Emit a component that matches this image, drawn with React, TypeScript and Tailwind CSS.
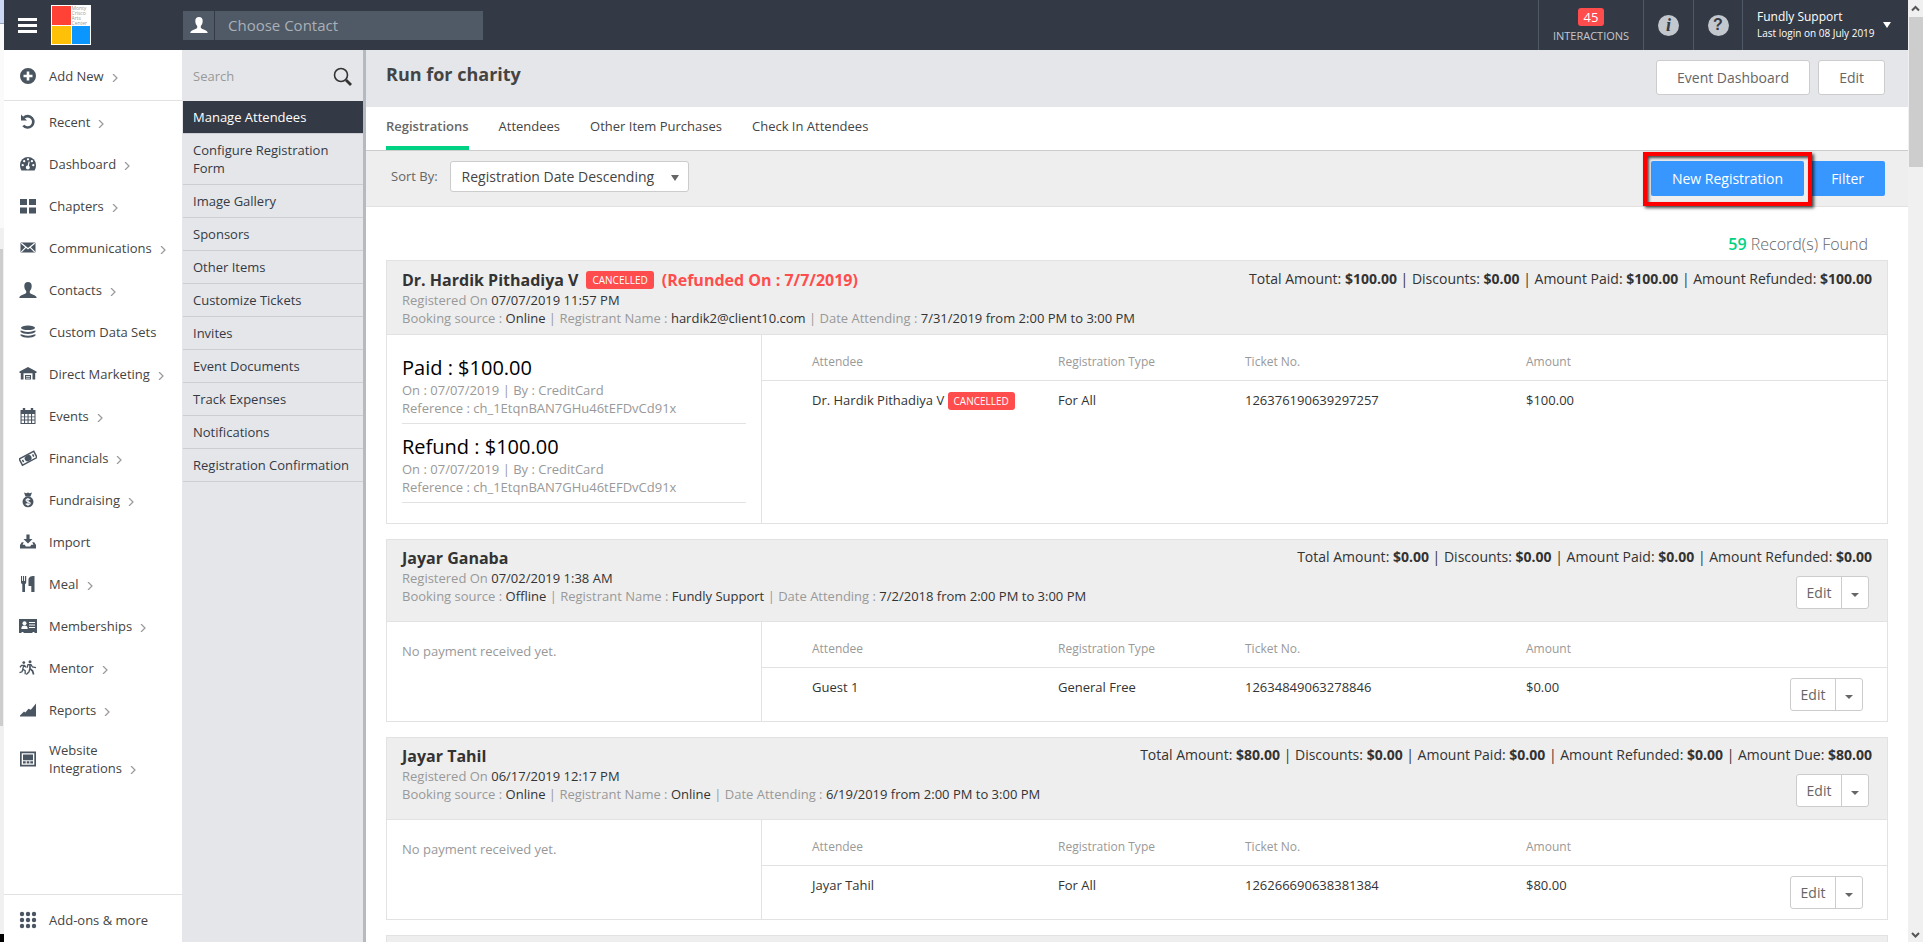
import type { ReactNode } from 'react'

const Icon = ({ children }: { children: ReactNode }) => (
  <svg viewBox="0 0 18 18" className="h-[18px] w-[18px] shrink-0 text-[#4a5562]" fill="currentColor" aria-hidden="true">
    {children}
  </svg>
)

const Caret = ({ className }: { className: string }) => (
  <svg viewBox="0 0 8 6" preserveAspectRatio="none" className={className} fill="currentColor" aria-hidden="true">
    <path d="M0 0h8L4 6z" />
  </svg>
)

const bust = (
  <path d="M9 0C6.600 0 5.300 1.600 5.300 4c0 2.200.8 3.900 1.900 5v1.800C6.900 12.600.5 12.500.3 16h17.400c-.2-3.500-6.600-3.400-6.900-5.200V9c1.100-1.100 1.900-2.800 1.900-5 0-2.400-1.300-4-3.700-4z" />
)

const icons: Record<string, ReactNode> = {
  add: <path fillRule="evenodd" d="M9 1a8 8 0 1 0 0 16A8 8 0 0 0 9 1zM7.700 4.500h2.600v3.200h3.200v2.600h-3.200v3.200H7.700v-3.200H4.500V7.700h3.200z" />,
  recent: (
    <>
      <path d="M4.800 4.600A5.700 5.700 0 1 1 4.300 12.500" fill="none" stroke="currentColor" strokeWidth="2.600" />
      <path d="M2 1.500v6h6z" />
    </>
  ),
  dashboard: (
    <>
      <path d="M1 10a8 8 0 0 1 16 0c0 2.200-.6 4-1.400 5.500H2.400C1.600 14 1 12.200 1 10z" />
      <g fill="#fff">
        <circle cx="3.700" cy="10.200" r="1.150" />
        <circle cx="5.200" cy="6.200" r="1.150" />
        <circle cx="9" cy="4.300" r="1.150" />
        <circle cx="12.900" cy="6.200" r="1.150" />
        <circle cx="14.300" cy="10.200" r="1.150" />
        <path d="M9.600 6.400l1.100.3-.8 4a2 2 0 1 1-1.200-.3z" />
      </g>
    </>
  ),
  chapters: <path d="M1 2h7v6H1zM10 2h7v6h-7zM1 10.500h7v6H1zM10 10.500h7v6h-7z" />,
  mail: (
    <>
      <path d="M2.300 3.500h13.400a.8.800 0 0 1 .8.800v8.400a.8.800 0 0 1-.8.800H2.300a.8.800 0 0 1-.8-.8V4.300a.8.800 0 0 1 .8-.8z" />
      <path d="M2.300 4.300L9 9.800l6.700-5.500M2.300 12.800l4.500-4.500M15.700 12.800l-4.500-4.500" fill="none" stroke="#fff" strokeWidth="1.200" />
    </>
  ),
  contacts: (
    <g transform="translate(0 1)">{bust}</g>
  ),
  data: (
    <>
      <ellipse cx="9" cy="4.800" rx="7" ry="2.300" />
      <path d="M1.500 7.500c2 0 3.500 1.400 7.500 1.400s5.500-1.400 7.500-1.400v1.300c-1.500 1.500-4.500 2.200-7.500 2.200s-6-.7-7.500-2.200zM1.500 11.300c2 0 3.500 1.400 7.500 1.400s5.500-1.400 7.500-1.400v1.300c-1.500 1.500-4.500 2.200-7.500 2.200s-6-.7-7.500-2.200z" />
    </>
  ),
  marketing: <path fillRule="evenodd" d="M9 2l8.500 4.500V8h-1.300v6.500h-2.700V8.300h-9v6.200H1.800V8H.5V6.500zM6 10h6v4.500H6zM7 11v.8h4V11zM7 12.700v.8h4v-.8z" />,
  events: (
    <>
      <path fillRule="evenodd" d="M1.500 3h15v14h-15zM2.600 7v2.400H5V7zm3.500 0v2.400h2.400V7zm3.500 0v2.400H12V7zm3.500 0v2.400h2.400V7zM2.600 10.300v2.300H5v-2.300zm3.500 0v2.300h2.400v-2.300zm3.500 0v2.300H12v-2.300zm3.500 0v2.300h2.400v-2.300zM2.600 13.500V16H5v-2.500zm3.500 0V16h2.400v-2.500zm3.500 0V16H12v-2.500zm3.500 0V16h2.400v-2.500z" />
      <path d="M3.800 1h2.400v4H3.800zM11.800 1h2.400v4h-2.400z" />
    </>
  ),
  financials: (
    <g transform="rotate(-28 9 9)">
      <path fillRule="evenodd" d="M0 5h18v8.500H0zM1.500 6.500V12h15V6.500z" />
      <ellipse cx="9" cy="9.200" rx="3.600" ry="3" />
      <path d="M2.500 8h1.500v2.500H2.500zM14 8h1.500v2.500H14z" />
    </g>
  ),
  fundraising: (
    <>
      <path d="M5 1.500l2.300.8L9 1.500l1.700.8 2.300-.8-1.500 4h-5z" />
      <circle cx="9" cy="10.800" r="5.500" />
      <path d="M11.200 8.600C9.500 7.500 7 7.900 7 9.300c0 2 4.200 1 4.200 3 0 1.400-2.700 1.700-4.500.5M9 7v8" fill="none" stroke="#fff" strokeWidth="1.100" />
    </>
  ),
  import: (
    <>
      <path d="M7.400 1.500h3.200V6H13.500L9 10.500 4.500 6h2.900z" />
      <path d="M2.800 9.200h2L3.500 11.800h2.300l1 1.700h4.400l1-1.700h2.300l-1.300-2.600h2L17 12v3.500H1V12z" />
    </>
  ),
  meal: (
    <>
      <path d="M2 1h1v5h.9V1h1.200v5H6V1h1.200v6c0 1.200-.5 1.800-1.200 2.200V17H3.300V9.200C2.500 8.800 2 8.200 2 7z" />
      <path d="M15.500 1v16h-3.200v-6H9.500V5c0-2.500 1.500-4 6-4z" />
    </>
  ),
  memberships: (
    <>
      <path d="M0 2h18v14h-2.500v-1h-2v1h-9v-1h-2v1H0z" />
      <g fill="#fff">
        <circle cx="5.500" cy="6.300" r="2" />
        <path d="M2.300 12c0-2.500 1-3.600 3.200-3.600S8.700 9.500 8.700 12zM10 5h6v1.100h-6zM10 7.500h6v1.100h-6zM10 10h6v1.100h-6z" />
      </g>
    </>
  ),
  mentor: (
    <>
      <circle cx="4.800" cy="3.600" r="1.400" />
      <circle cx="11" cy="2.700" r="1.500" />
      <g fill="none" stroke="currentColor" strokeWidth="1.300">
        <path d="M1 8.300l1.500-2h3L7 8.300M4.700 6.300L3.800 10l2.400 1.800v3.400M3.800 10.300L3 12.800l-2.500.8" />
        <path strokeWidth="1.700" d="M11 5v4.700l2.600 2.300 1 3.500" />
        <path d="M8 8.700l1-3h3L13.500 8l3.500.7M10.700 10L10 12.800l-2.700 2.700" />
      </g>
    </>
  ),
  reports: <path d="M1 15.500v-1L5 10.500l1.300 1L9.500 7.800l2.300 1L17 2.500v13z" />,
  website: <path fillRule="evenodd" d="M1 1.500h16v15H1zM2.700 3.200v11.600h12.600V3.200zM4 4.500h10v5.700H4zM4 11.200h2.700v2.300H4zM7.700 11.200h2.700v2.300H7.700zM11.300 11.200H14v2.300h-2.700z" />,
  addons: (
    <>
      {[3, 9, 15].map((y) => [3, 9, 15].map((x) => <circle key={`${x}-${y}`} cx={x} cy={y} r="2.200" />))}
    </>
  ),
}

const navItems = [
  { icon: 'recent', label: 'Recent', arrow: true },
  { icon: 'dashboard', label: 'Dashboard', arrow: true },
  { icon: 'chapters', label: 'Chapters', arrow: true },
  { icon: 'mail', label: 'Communications', arrow: true },
  { icon: 'contacts', label: 'Contacts', arrow: true },
  { icon: 'data', label: 'Custom Data Sets', arrow: false },
  { icon: 'marketing', label: 'Direct Marketing', arrow: true },
  { icon: 'events', label: 'Events', arrow: true },
  { icon: 'financials', label: 'Financials', arrow: true },
  { icon: 'fundraising', label: 'Fundraising', arrow: true },
  { icon: 'import', label: 'Import', arrow: false },
  { icon: 'meal', label: 'Meal', arrow: true },
  { icon: 'memberships', label: 'Memberships', arrow: true },
  { icon: 'mentor', label: 'Mentor', arrow: true },
  { icon: 'reports', label: 'Reports', arrow: true },
  { icon: 'website', label: 'Website Integrations', arrow: true },
]

const eventLinks = [
  'Manage Attendees',
  'Configure Registration Form',
  'Image Gallery',
  'Sponsors',
  'Other Items',
  'Customize Tickets',
  'Invites',
  'Event Documents',
  'Track Expenses',
  'Notifications',
  'Registration Confirmation',
]

type Registration = {
  name: string
  cancelled?: boolean
  refundedOn?: string
  registeredOn: string
  source: string
  registrant: string
  attending: string
  totals: [string, string][]
  payments: { title: string; on: string; by: string; reference: string }[]
  attendee: string
  type: string
  ticket: string
  amount: string
}

const registrations: Registration[] = [
  {
    name: 'Dr. Hardik Pithadiya V',
    cancelled: true,
    refundedOn: '7/7/2019',
    registeredOn: '07/07/2019 11:57 PM',
    source: 'Online',
    registrant: 'hardik2@client10.com',
    attending: '7/31/2019 from 2:00 PM to 3:00 PM',
    totals: [
      ['Total Amount', '$100.00'],
      ['Discounts', '$0.00'],
      ['Amount Paid', '$100.00'],
      ['Amount Refunded', '$100.00'],
    ],
    payments: [
      { title: 'Paid : $100.00', on: '07/07/2019', by: 'CreditCard', reference: 'ch_1EtqnBAN7GHu46tEFDvCd91x' },
      { title: 'Refund : $100.00', on: '07/07/2019', by: 'CreditCard', reference: 'ch_1EtqnBAN7GHu46tEFDvCd91x' },
    ],
    attendee: 'Dr. Hardik Pithadiya V',
    type: 'For All',
    ticket: '126376190639297257',
    amount: '$100.00',
  },
  {
    name: 'Jayar Ganaba',
    registeredOn: '07/02/2019 1:38 AM',
    source: 'Offline',
    registrant: 'Fundly Support',
    attending: '7/2/2018 from 2:00 PM to 3:00 PM',
    totals: [
      ['Total Amount', '$0.00'],
      ['Discounts', '$0.00'],
      ['Amount Paid', '$0.00'],
      ['Amount Refunded', '$0.00'],
    ],
    payments: [],
    attendee: 'Guest 1',
    type: 'General Free',
    ticket: '12634849063278846',
    amount: '$0.00',
  },
  {
    name: 'Jayar Tahil',
    registeredOn: '06/17/2019 12:17 PM',
    source: 'Online',
    registrant: 'Online',
    attending: '6/19/2019 from 2:00 PM to 3:00 PM',
    totals: [
      ['Total Amount', '$80.00'],
      ['Discounts', '$0.00'],
      ['Amount Paid', '$0.00'],
      ['Amount Refunded', '$0.00'],
      ['Amount Due', '$80.00'],
    ],
    payments: [],
    attendee: 'Jayar Tahil',
    type: 'For All',
    ticket: '126266690638381384',
    amount: '$80.00',
  },
]

const CancelledBadge = () => (
  <span className="inline-block h-[18px] rounded-[3px] bg-[#ff4c4c] px-[6px] text-[10px] leading-[18px] font-normal text-white">
    CANCELLED
  </span>
)

const EditGroup = () => (
  <div className="inline-flex h-[33px] rounded-[3px] border border-[#ccc] bg-white text-sm text-[#666]">
    <button type="button" className="w-[45px] border-r border-[#ccc]">
      Edit
    </button>
    <button type="button" aria-label="More actions" className="flex w-[26px] items-center justify-center pt-1">
      <Caret className="h-1 w-2" />
    </button>
  </div>
)

const NavLink = ({ icon, label, arrow }: { icon: string; label: string; arrow?: boolean }) => (
  <a href="#" className="flex min-h-[42px] items-center gap-3 py-[10px] pr-3 pl-[15px] leading-[18px]">
    <Icon>{icons[icon]}</Icon>
    <span>
      {label}
      {arrow && (
        <svg viewBox="0 0 6 8" className="ml-2 inline-block h-2 w-[6px] text-[#999]" fill="none" stroke="currentColor" aria-hidden="true">
          <path d="M1 0l4 4-4 4" strokeWidth="1.200" />
        </svg>
      )}
    </span>
  </a>
)

const RegistrationCard = ({ data }: { data: Registration }) => (
  <article className="border border-[#e2e2e2] bg-white">
    <header
      className={
        data.cancelled
          ? 'flex min-h-[74px] justify-between border-b border-[#e2e2e2] bg-[#eee] px-[15px] pt-2'
          : 'flex min-h-[82px] justify-between border-b border-[#e2e2e2] bg-[#eee] px-[15px] pt-[7px]'
      }
    >
      <div className="leading-[18px] text-[#999]">
        <h2 className="flex h-[22px] items-center gap-2 text-base font-bold text-[#333]">
          {data.name}
          {data.cancelled && <CancelledBadge />}
          {data.refundedOn && <span className="text-[#ff4c4c]">(Refunded On : {data.refundedOn})</span>}
        </h2>
        <p>
          Registered On <span className="text-[#333]">{data.registeredOn}</span>
        </p>
        <p>
          Booking source : <span className="text-[#333]">{data.source}</span> | Registrant Name :{' '}
          <span className="text-[#333]">{data.registrant}</span> | Date Attending :{' '}
          <span className="text-[#333]">{data.attending}</span>
        </p>
      </div>
      <div className="flex flex-col items-end text-sm leading-5 text-[#333]">
        <p>
          {data.totals.map(([label, value], i) => (
            <span key={label}>
              {i > 0 && ' | '}
              {label}: <b>{value}</b>
            </span>
          ))}
        </p>
        {!data.cancelled && (
          <div className="mt-[9px] mr-[3px]">
            <EditGroup />
          </div>
        )}
      </div>
    </header>
    <div className="flex">
      <div className="w-[375px] shrink-0 border-r border-[#e2e2e2] px-[15px] pt-5 leading-[18px] text-[#999]">
        {data.payments.length === 0 && <p>No payment received yet.</p>}
        {data.payments.map((p) => (
          <div key={p.title} className="mb-[10px] border-b border-[#e2e2e2] pb-[6px]">
            <h3 className="text-xl leading-[26px] text-black">{p.title}</h3>
            <p>
              On : {p.on} | By : {p.by}
            </p>
            <p>Reference : {p.reference}</p>
          </div>
        ))}
        {data.payments.length > 0 && <div className="h-[10px]" />}
      </div>
      <div className="min-w-0 flex-1">
        <table className="w-full table-fixed border-separate border-spacing-0 text-left text-[#333]">
          <colgroup>
            <col className="w-[296px]" />
            <col className="w-[187px]" />
            <col className="w-[281px]" />
            <col />
            <col className="w-[120px]" />
          </colgroup>
          <thead className="text-xs text-[#999]">
            <tr>
              <th scope="col" className="h-[46px] border-b border-[#e2e2e2] pt-2 pl-[50px] font-normal">Attendee</th>
              <th scope="col" className="border-b border-[#e2e2e2] pt-2 font-normal">Registration Type</th>
              <th scope="col" className="border-b border-[#e2e2e2] pt-2 font-normal">Ticket No.</th>
              <th scope="col" className="border-b border-[#e2e2e2] pt-2 font-normal">Amount</th>
              <td className="border-b border-[#e2e2e2]" />
            </tr>
          </thead>
          <tbody>
            <tr className="align-top leading-[18px]">
              <td className="h-[53px] pt-[10px] pl-[50px]">
                {data.attendee} {data.cancelled && <CancelledBadge />}
              </td>
              <td className="pt-[10px]">{data.type}</td>
              <td className="pt-[10px]">{data.ticket}</td>
              <td className="pt-[10px]">{data.amount}</td>
              <td className="pt-[10px]">
                {!data.cancelled && (
                  <div className="flex justify-end pr-6">
                    <EditGroup />
                  </div>
                )}
              </td>
            </tr>
          </tbody>
        </table>
      </div>
    </div>
  </article>
)

const TopBar = () => (
  <header className="flex h-[50px] shrink-0 items-center bg-[#343a45] text-white">
    <div className="flex w-[179px] shrink-0 items-center gap-[14px] pl-[14px]">
      <button type="button" aria-label="Toggle menu" className="flex h-[15px] w-[19px] flex-col justify-between">
        <span className="h-[3px] w-full bg-white" />
        <span className="h-[3px] w-full bg-white" />
        <span className="h-[3px] w-full bg-white" />
      </button>
      <div className="grid h-10 w-10 grid-cols-2 grid-rows-2 gap-px overflow-hidden bg-white p-px">
        <span className="bg-[#ff4136]" />
        <span className="overflow-hidden text-[5px] leading-[5px] text-[#999]">
          Monty Crisco Arts Center
        </span>
        <span className="bg-[#ffc107]" />
        <span className="bg-[#0a95ff]" />
      </div>
    </div>
    <label className="flex h-[29px] w-[300px] gap-px">
      <span className="flex w-[31px] items-center justify-center bg-[#4f5a66]">
        <svg viewBox="0 0 18 16" className="h-4 w-[18px]" fill="#fff" aria-hidden="true">
          {bust}
        </svg>
      </span>
      <input
        type="text"
        aria-label="Choose Contact"
        placeholder="Choose Contact"
        className="min-w-0 flex-1 bg-[#4f5a66] px-[13px] text-[15px] placeholder:text-[#aab0b7]"
      />
    </label>
    <div className="ml-auto flex h-full divide-x divide-[#4f5a66] border-l border-[#4f5a66]">
      <a href="#" className="flex w-[105px] flex-col items-center pt-2 text-[#c3c8ce]">
        <span className="h-[18px] w-[26px] rounded-[3px] bg-[#ff4c4c] text-center leading-[18px] text-white">45</span>
        <span className="pt-px text-[11px] leading-[18px]">INTERACTIONS</span>
      </a>
      <button type="button" aria-label="Information" className="flex w-[50px] items-center justify-center">
        <span className="flex h-[21px] w-[21px] items-center justify-center rounded-full bg-[#c3c8ce] font-['Liberation_Serif',serif] text-lg leading-none font-bold text-[#343a45] italic">
          i
        </span>
      </button>
      <button type="button" aria-label="Help" className="flex w-[49px] items-center justify-center">
        <span className="flex h-[21px] w-[21px] items-center justify-center rounded-full bg-[#c3c8ce] font-['Liberation_Sans',sans-serif] text-base leading-none font-bold text-[#343a45]">
          ?
        </span>
      </button>
      <button type="button" className="flex w-[165px] items-center pl-[14px] text-left">
        <span className="w-[126px] leading-4 whitespace-nowrap">
          <span className="block text-xs leading-4">Fundly Support</span>
          <span className="block text-[10px] leading-4">Last login on 08 July 2019</span>
        </span>
        <Caret className="h-[6px] w-2" />
      </button>
    </div>
  </header>
)

export default function App() {
  return (
    <div className="flex h-screen overflow-hidden bg-white font-['Open_Sans',sans-serif] text-[13px] text-[#444]">
      <div className="flex w-1 shrink-0 flex-col bg-[#f0f0f0]">
        <div className="h-6 border-b border-[#9aa0b4] bg-[#ccd8f3]" />
        <div className="h-[204px] bg-[#fafafa]" />
        <div className="mt-[21px] mr-px h-[477px] bg-[#cdcdcd]" />
        <div className="mt-auto h-2 bg-black" />
      </div>

      <div className="flex min-w-0 flex-1 flex-col">
        <TopBar />
        <div className="flex min-h-0 flex-1">
          <nav aria-label="Main" className="flex w-[178px] shrink-0 flex-col">
            <div className="flex h-[51px] flex-col justify-center border-b border-[#e2e2e2] pt-[2px]">
              <NavLink icon="add" label="Add New" arrow />
            </div>
            <div>
              {navItems.map((item) => (
                <NavLink key={item.label} {...item} />
              ))}
            </div>
            <div className="mt-auto flex h-12 shrink-0 flex-col justify-center border-t border-[#e2e2e2] pt-[2px]">
              <NavLink icon="addons" label="Add-ons & more" />
            </div>
          </nav>

          <aside className="w-[184px] shrink-0 border-r-[3px] border-[#b5b9c1] bg-[#e5e6ea] pl-px">
            <div className="flex h-[51px] items-center px-[10px] pt-[2px]">
              <input
                type="search"
                aria-label="Search"
                placeholder="Search"
                className="min-w-0 flex-1 placeholder:text-[#999]"
              />
              <svg viewBox="0 0 20 20" className="h-5 w-5" fill="none" stroke="#333" aria-hidden="true">
                <circle cx="8" cy="8" r="6.500" strokeWidth="1.600" />
                <path d="M13 13l5 5" strokeWidth="2.800" />
              </svg>
            </div>
            {eventLinks.map((label, i) => (
              <a
                key={label}
                href="#"
                className={
                  i === 0
                    ? 'block border-b border-[#ccced3] bg-[#343a45] px-[10px] py-[7px] leading-[18px] text-white'
                    : 'block border-b border-[#ccced3] px-[10px] py-[7px] leading-[18px] text-[#343a45]'
                }
              >
                {label}
              </a>
            ))}
          </aside>

          <main className="flex min-w-0 flex-1 flex-col overflow-hidden">
            <div className="flex h-[57px] shrink-0 justify-between bg-[#e5e6ea] pt-[10px] pr-[23px] pl-5">
              <h1 className="text-lg leading-7 font-bold">Run for charity</h1>
              <div className="flex h-[35px] gap-2 text-sm text-[#666]">
                <button type="button" className="rounded-[3px] border border-[#ccc] bg-white px-5">
                  Event Dashboard
                </button>
                <button type="button" className="rounded-[3px] border border-[#ccc] bg-white px-5">
                  Edit
                </button>
              </div>
            </div>

            <div className="flex h-11 shrink-0 gap-[30px] border-b border-[#ccc] pl-5 leading-[39px]">
              <a href="#" className="border-b-4 border-[#00d284] font-semibold text-[#666]">
                Registrations
              </a>
              <a href="#">Attendees</a>
              <a href="#">Other Item Purchases</a>
              <a href="#">Check In Attendees</a>
            </div>

            <div className="flex h-14 shrink-0 justify-between border-b border-[#e2e2e2] bg-[#eee] pt-[10px] pr-[23px] pl-[25px]">
              <div className="flex h-[31px] items-center gap-3 text-[#666]">
                <label htmlFor="sort">Sort By:</label>
                <div className="relative">
                  <select
                    id="sort"
                    className="h-[31px] w-[239px] appearance-none rounded-[3px] border border-[#ccc] bg-white pl-[11px] text-sm text-[#444]"
                  >
                    <option>Registration Date Descending</option>
                  </select>
                  <Caret className="pointer-events-none absolute top-[14px] right-[10px] h-[6px] w-2" />
                </div>
              </div>
              <div className="flex h-[35px] gap-[6px] text-sm text-white">
                <div className="relative">
                  <button type="button" className="h-full rounded-[2px] bg-[#3897ff] px-[21px]">
                    New Registration
                  </button>
                  <div className="pointer-events-none absolute -inset-x-2 -top-[9px] -bottom-[10px] border-4 border-[#fe0000] shadow-[2px_2px_3px_rgba(0,0,0,0.7),inset_2px_2px_3px_rgba(0,0,0,0.7)]" />
                </div>
                <button type="button" className="rounded-[2px] bg-[#3897ff] px-[21px]">
                  Filter
                </button>
              </div>
            </div>

            <div className="flex flex-col gap-[15px] px-5">
              <p className="-mb-[15px] h-[53px] pt-[25px] pr-5 text-right text-base leading-6 font-light text-[#666]">
                <span className="font-semibold text-[#00d284]">59</span> Record(s) Found
              </p>
              {registrations.map((data) => (
                <RegistrationCard key={data.ticket} data={data} />
              ))}
              <div className="h-20 border border-[#e2e2e2] bg-[#eee]" />
            </div>
          </main>
        </div>
      </div>

      <div className="flex w-[15px] shrink-0 flex-col items-center bg-[#f0f0f0] text-[#555]">
        <svg viewBox="0 0 15 17" className="h-[17px] w-[15px] shrink-0" fill="none" stroke="currentColor" strokeWidth="2" aria-hidden="true">
          <path d="M4 10.500L7.500 7l3.500 3.500" />
        </svg>
        <div className="h-[150px] w-[14px] shrink-0 bg-[#cdcdcd]" />
        <svg viewBox="0 0 15 17" className="mt-auto h-[17px] w-[15px] shrink-0" fill="none" stroke="currentColor" strokeWidth="2" aria-hidden="true">
          <path d="M4 8l3.500 3.500L11 8" />
        </svg>
      </div>
    </div>
  )
}
